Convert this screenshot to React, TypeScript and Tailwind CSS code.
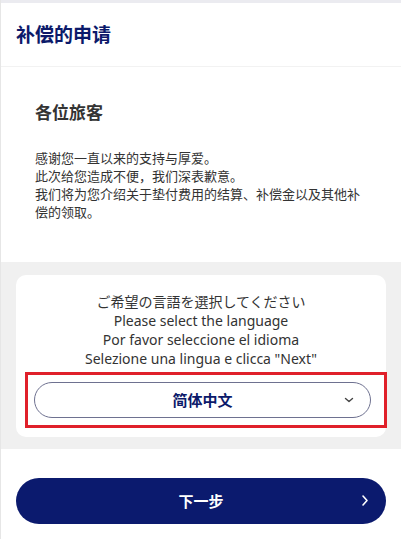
import React from "react";

const font = { fontFamily: '"Noto Sans CJK SC", "Noto Sans", sans-serif' };

export default function App() {
  return (
    <div className="w-[401px] h-[539px] bg-white overflow-hidden flex flex-col border-l border-[#e6e6e6]" style={font}>
      <div className="h-[3px] bg-[#ebebf0] shrink-0" />
      <div className="h-[64px] flex items-center px-[15px] border-b border-[#f2f2f2] shrink-0">
        <h1 className="text-[19px] font-bold text-[#0c1a6a] leading-none -mt-[2px]">补偿的申请</h1>
      </div>
      <div className="h-[195px] shrink-0 px-[34px] pt-[33px]">
        <h2 className="text-[17px] font-bold text-[#333333] leading-[24px]">各位旅客</h2>
        <p className="mt-[25px] text-[13px] leading-[18px] text-[#333333] w-[330px]">
          感谢您一直以来的支持与厚爱。
          <br />
          此次给您造成不便，我们深表歉意。
          <br />
          我们将为您介绍关于垫付费用的结算、补偿金以及其他补偿的领取。
        </p>
      </div>
      <div className="h-[187px] shrink-0 bg-[#f0f0f0] px-[15px] pt-[13px]">
        <div className="h-[162px] bg-white rounded-[10px] pt-[17px] flex flex-col items-center">
          <div className="text-center text-[14px] leading-[19px] text-[#333333]" style={{ fontFamily: '"Noto Sans", "Noto Sans CJK JP", sans-serif' }}>
            <div>ご希望の言語を選択してください</div>
            <div>Please select the language</div>
            <div>Por favor seleccione el idioma</div>
            <div>Selezione una lingua e clicca "Next"</div>
          </div>
          <div className="mt-[4px] self-start ml-[9px] w-[362px] h-[56px] border-[3px] border-[#e0202a] pl-[6px] pr-[13px] flex items-center">
            <div className="relative w-full h-[36px] rounded-full border border-[#6e7190] flex items-center justify-center">
              <span className="text-[15px] font-bold text-[#0c1a6a]">简体中文</span>
              <svg className="absolute right-[16px] top-[13px]" width="10" height="8" viewBox="0 0 10 8" fill="none">
                <path d="M1.5 2.5 L5 5.5 L8.5 2.5" stroke="#444" strokeWidth="1.4" strokeLinecap="round" strokeLinejoin="round" />
              </svg>
            </div>
          </div>
        </div>
      </div>
      <div className="flex-1 px-[15px] pt-[29px]">
        <button className="relative w-full h-[46px] rounded-full bg-[#0b1a6e] flex items-center justify-center">
          <span className="text-[15px] font-bold text-white">下一步</span>
          <svg className="absolute right-[17px] top-[16px]" width="8" height="13" viewBox="0 0 8 13" fill="none">
            <path d="M2 2 L6 6.5 L2 11" stroke="#ffffff" strokeWidth="1.6" strokeLinecap="round" strokeLinejoin="round" />
          </svg>
        </button>
      </div>
    </div>
  );
}
